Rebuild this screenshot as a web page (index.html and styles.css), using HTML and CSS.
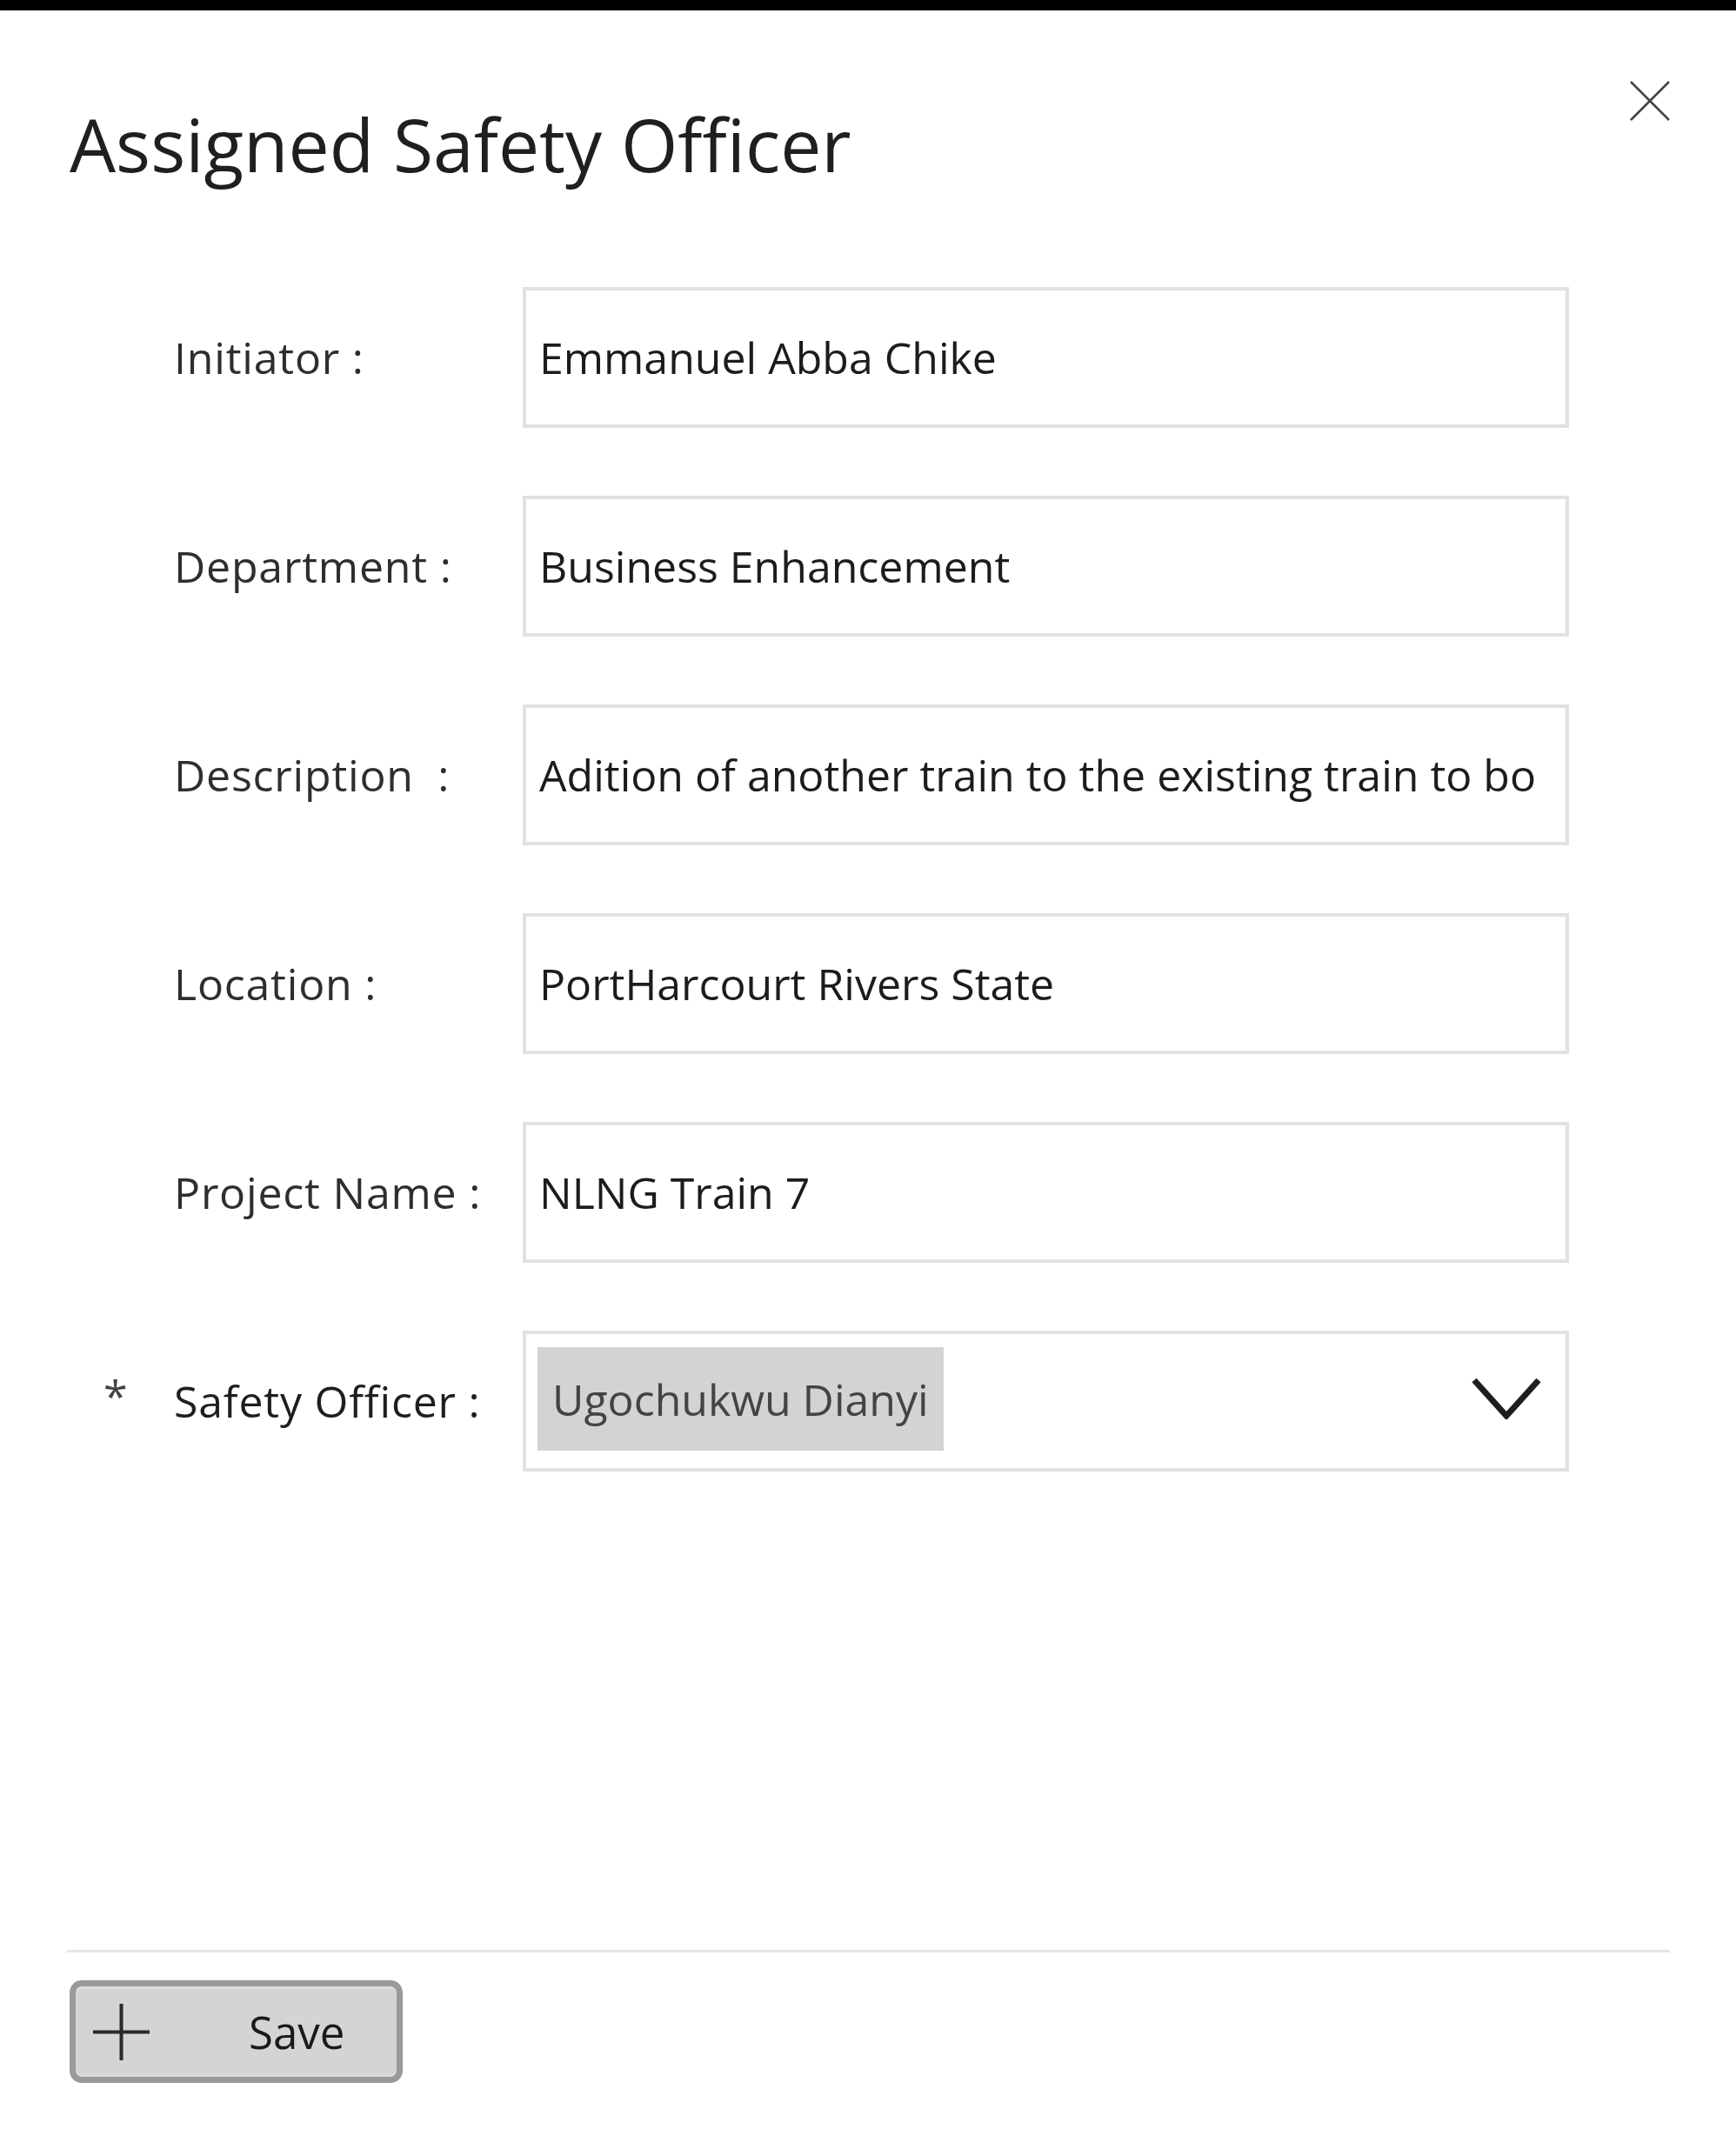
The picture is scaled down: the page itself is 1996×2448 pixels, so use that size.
FILE: index.html
```html
<!DOCTYPE html>
<html lang="en">
<head>
<meta charset="utf-8">
<title>Assigned Safety Officer</title>
<link rel="stylesheet" href="styles.css">
</head>
<body>
<div class="page">
  <div class="topbar"></div>
  <div class="dialog">
    <header class="dialog-head">
      <h1 class="title">Assigned Safety Officer</h1>
      <button class="close" type="button" aria-label="Close">
        <svg width="46" height="46" viewBox="0 0 46 46"><path d="M1 1 L45 45 M45 1 L1 45" stroke="#444" stroke-width="2.6" fill="none"/></svg>
      </button>
    </header>

    <form class="form">
      <div class="row">
        <span class="req"></span>
        <label class="label">Initiator :</label>
        <div class="field"><span class="value">Emmanuel Abba Chike</span></div>
      </div>
      <div class="row">
        <span class="req"></span>
        <label class="label">Department :</label>
        <div class="field"><span class="value">Business Enhancement</span></div>
      </div>
      <div class="row">
        <span class="req"></span>
        <label class="label">Description&nbsp; :</label>
        <div class="field"><span class="value">Adition of another train to the existing train to bo</span></div>
      </div>
      <div class="row">
        <span class="req"></span>
        <label class="label">Location :</label>
        <div class="field"><span class="value">PortHarcourt Rivers State</span></div>
      </div>
      <div class="row">
        <span class="req"></span>
        <label class="label">Project Name :</label>
        <div class="field"><span class="value">NLNG Train 7</span></div>
      </div>
      <div class="row">
        <span class="req req-on">*</span>
        <label class="label label-strong">Safety Officer :</label>
        <div class="field field-select">
          <span class="selected">Ugochukwu Dianyi</span>
          <svg class="chevron" width="80" height="48" viewBox="0 0 80 48"><polyline points="3,3 40,44 77,3" fill="none" stroke="#1e1e1e" stroke-width="7"/></svg>
        </div>
      </div>
    </form>

    <footer class="footer">
      <button class="save" type="button">
        <svg class="plus" width="65" height="65" viewBox="0 0 65 65"><path d="M32.5 0 V65 M0 32.5 H65" stroke="#2a2a2a" stroke-width="4" fill="none"/></svg>
        <span class="save-text">Save</span>
      </button>
    </footer>
  </div>
</div>
</body>
</html>
```

FILE: styles.css
```css
* { box-sizing: border-box; }

html, body {
  margin: 0;
  padding: 0;
  background: #ffffff;
}

body {
  font-family: "Open Sans", "Noto Sans", "Liberation Sans", sans-serif;
  color: #222;
}

.page {
  display: flex;
  flex-direction: column;
  min-height: 2448px;
}

.topbar {
  height: 12px;
  background: #000;
  flex: none;
}

.dialog {
  flex: 1;
  display: flex;
  flex-direction: column;
  padding: 0 76px 53px 77px;
}

.dialog-head {
  display: flex;
  justify-content: space-between;
  align-items: flex-start;
  padding-top: 81px;
}

.title {
  margin: 23px 0 0 3px;
  font-size: 84px;
  line-height: 100px;
  font-weight: 500;
  color: #1f1f1f;
}

.close {
  border: 0;
  background: transparent;
  padding: 0;
  width: 46px;
  height: 46px;
  display: block;
  cursor: pointer;
}
.close svg { display: block; }

.form {
  margin-top: 114px;
  display: flex;
  flex-direction: column;
  gap: 78px;
}

.row {
  display: grid;
  grid-template-columns: 123px 401px 1203px;
  align-items: center;
  height: 162px;
}

.req {
  font-size: 50px;
  color: #444;
  padding-left: 42px;
  margin-bottom: 12px;
}

.label {
  font-size: 50px;
  font-weight: 500;
  letter-spacing: 0.8px;
  color: #2e2e2e;
  white-space: nowrap;
}
.label-strong { color: #1e1e1e; }

.field {
  height: 162px;
  border: 4px solid #e1e1e1;
  background: #fff;
  display: flex;
  align-items: center;
  padding: 0 22px 0 15px;
  font-size: 50px;
  color: #1c1c1c;
}

.value {
  flex: 1;
  min-width: 0;
  overflow: hidden;
  white-space: nowrap;
}

.field-select {
  justify-content: space-between;
  padding: 0 28px 0 13px;
}

.selected {
  background: #d3d3d3;
  color: #444;
  height: 119px;
  display: flex;
  align-items: center;
  padding: 0 17px 0 17px;
  margin-bottom: 5px;
  white-space: nowrap;
}

.chevron { display: block; margin-bottom: 6px; }

.footer {
  margin-top: auto;
  border-top: 3px solid #e6e6e6;
  padding-top: 32px;
}

.save {
  margin-left: 3px;
  width: 383px;
  height: 118px;
  border: 7px solid #9a9a9a;
  border-radius: 14px;
  background: #d4d4d4;
  box-shadow: inset 0 3px 0 #dcdcdc, inset 0 -3px 0 #dadada;
  display: flex;
  align-items: center;
  padding: 0 0 0 20px;
  font-family: "Open Sans", "Noto Sans", "Liberation Sans", sans-serif;
  cursor: pointer;
}

.plus { display: block; flex: none; }

.save-text {
  margin-left: 114px;
  font-size: 51px;
  color: #1a1a1a;
  line-height: 1;
}
```
